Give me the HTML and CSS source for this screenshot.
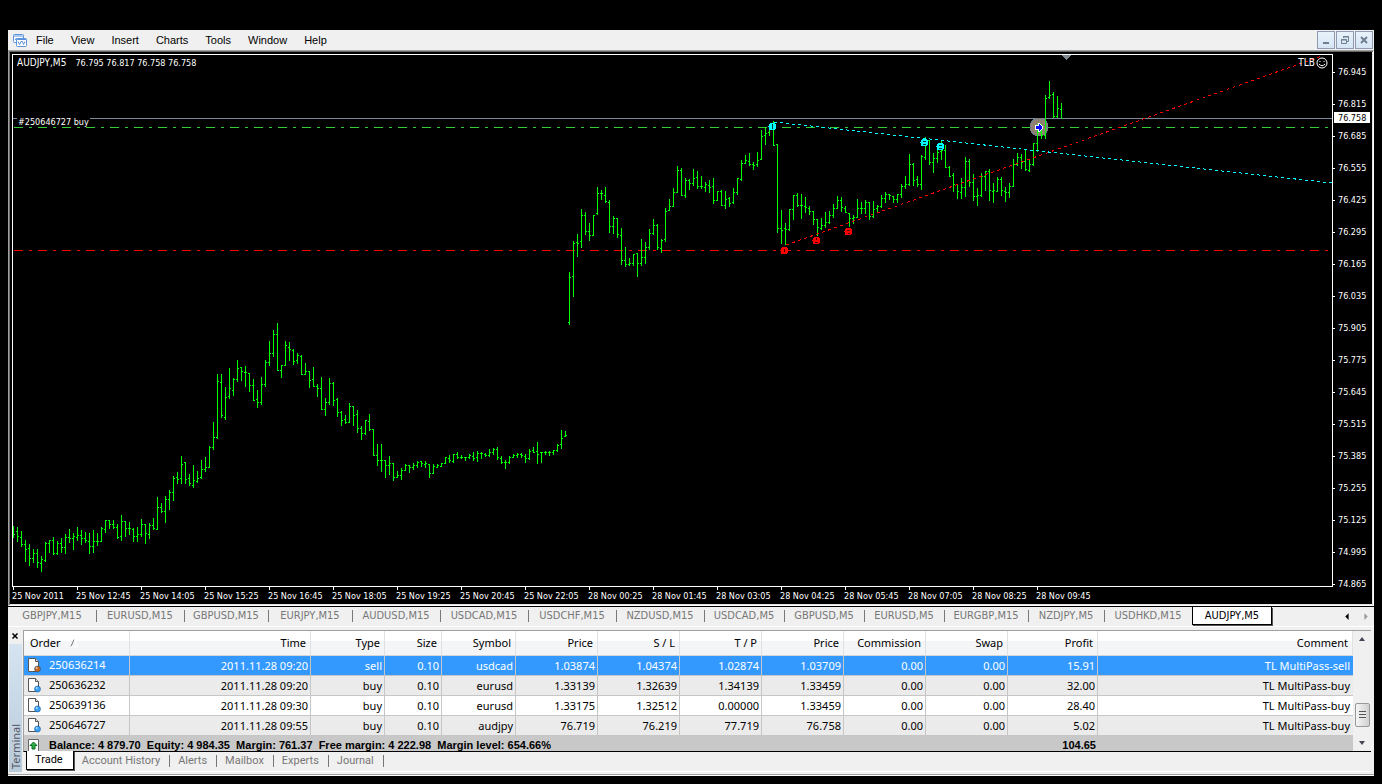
FILE: index.html
```html
<!DOCTYPE html>
<html lang="en">
<head>
<meta charset="utf-8">
<title>AUDJPY,M5</title>
<link rel="stylesheet" href="styles.css">
</head>
<body>
<svg class="defs" width="0" height="0" aria-hidden="true">
  <symbol id="doc" viewBox="0 0 15 15">
    <path d="M1.500 .5h7l3 3v10h-10z" fill="#fff" stroke="#555"/>
    <path d="M8.500 .5v3h3" fill="#ddd" stroke="#555"/>
    <circle cx="10.500" cy="11" r="3" fill="currentColor" stroke="#0a4a90" stroke-opacity=".5"/>
    <circle cx="9.700" cy="10" r="1" fill="#fff" fill-opacity=".6"/>
  </symbol>
</svg>
<div class="app">
  <header class="menubar">
    <svg class="logo" viewBox="0 0 15 15" aria-hidden="true">
      <rect x="1.500" y="1.500" width="10" height="8" rx="1" fill="#fff" stroke="#5b94dc"/>
      <path d="M2 3h9" stroke="#5b94dc"/>
      <path d="M3 7l1.500-2 1 2 1.500-2" fill="none" stroke="#5b94dc"/>
      <rect x="4.500" y="5.500" width="10" height="8" rx="1" fill="#fff" stroke="#5b94dc"/>
      <path d="M5 6.500h9" stroke="#5b94dc"/>
      <path d="M6 8.500l1.500 3 1.500-3 1.500 0 1 3 1.500-3" fill="none" stroke="#5b94dc"/>
    </svg>
    <nav class="menu">
      <button>File</button><button>View</button><button>Insert</button><button>Charts</button><button>Tools</button><button>Window</button><button>Help</button>
    </nav>
    <div class="winbtns">
      <button aria-label="Minimize"><svg viewBox="0 0 16 16"><path d="M5 10h6v2H5z" fill="#6d7f92"/></svg></button>
      <button aria-label="Restore"><svg viewBox="0 0 16 16"><path d="M6.500 6V4.500h5v5H10M6 5h6" fill="none" stroke="#6d7f92"/><path d="M4.500 7.500h5v4h-5zM4 8h6" fill="none" stroke="#6d7f92"/></svg></button>
      <button aria-label="Close"><svg viewBox="0 0 16 16"><path d="M5 5l6 6M11 5l-6 6" stroke="#6d7f92" stroke-width="2"/></svg></button>
    </div>
  </header>

  <main class="chart">
    <div class="plot">
      <svg class="canvas" viewBox="13 55 1319 531" preserveAspectRatio="none" shape-rendering="crispEdges">
        <path d="M13 118.500H1332" stroke="#778899"/>
        <path d="M14 127.500H1329" stroke="#32cd32" stroke-dasharray="9 6 3 6"/>
        <path d="M14 250.500H1329" stroke="#f00" stroke-dasharray="9 6 3 6"/>
        <circle cx="1039" cy="127" r="9" fill="#8f8070" stroke="#708090"/>
        <path id="bars" fill="#0f0"/>
        <path d="M774 122L1332 183" stroke="#0ff" stroke-dasharray="3 3"/>
        <path d="M786 245L1322 56" stroke="#f00" stroke-dasharray="3 3.400"/>
        <path d="M1061 55h11l-5.500 5z" fill="#808890"/>
        <g fill="#0ff">
          <circle cx="772.500" cy="126.500" r="4"/><circle cx="924.500" cy="142.500" r="4"/><circle cx="940.500" cy="146.500" r="4"/>
        </g>
        <g fill="#f00">
          <circle cx="784.500" cy="250.500" r="4"/><circle cx="816.500" cy="240.500" r="4"/><circle cx="848.500" cy="231.500" r="4"/>
        </g>
        <g fill="#003c3c">
          <path d="M772 124h1v5h-1z"/><path d="M923 141h3v1h-3zM923 144h3v1h-3z"/><path d="M939 145h3v1h-3zM939 148h3v1h-3z"/>
        </g>
        <g fill="#400">
          <path d="M784 249h1v3h-1z"/><path d="M816 238h1v2h-1zM815 242h3v1h-3z"/><path d="M847 230h3v1h-3zM848 233h2v1h-2z"/>
        </g>
        <path d="M1035 125h3v-2h2v1h1v1h1v1h1v3h-1v1h-1v1h-1v1h-2v-2h-3z" fill="#fff"/>
        <path d="M1036 126h3v-2h1v1h1v1h1v3h-1v1h-1v1h-1v-2h-3z" fill="#00f"/>
      </svg>
      <p class="quote"><span class="symbol">AUDJPY,M5</span><span>76.795 76.817 76.758 76.758</span></p>
      <p class="order-tag">#250646727 buy</p>
      <p class="expert">TLB
        <svg viewBox="0 0 12 12" aria-hidden="true"><circle cx="6" cy="6" r="5" fill="none" stroke="#fff"/><path d="M4 4v1M8 4v1M3 7q3 3.500 6 0" fill="none" stroke="#fff"/></svg>
      </p>
    </div>
    <div class="prices">
      <span>76.945</span><span>76.815</span><span>76.685</span><span>76.555</span><span>76.425</span><span>76.295</span><span>76.165</span><span>76.035</span><span>75.905</span><span>75.775</span><span>75.645</span><span>75.515</span><span>75.385</span><span>75.255</span><span>75.125</span><span>74.995</span><span>74.865</span>
      <b class="bid">76.758</b>
    </div>
    <div class="times">
      <span>25 Nov 2011</span><span>25 Nov 12:45</span><span>25 Nov 14:05</span><span>25 Nov 15:25</span><span>25 Nov 16:45</span><span>25 Nov 18:05</span><span>25 Nov 19:25</span><span>25 Nov 20:45</span><span>25 Nov 22:05</span><span>28 Nov 00:25</span><span>28 Nov 01:45</span><span>28 Nov 03:05</span><span>28 Nov 04:25</span><span>28 Nov 05:45</span><span>28 Nov 07:05</span><span>28 Nov 08:25</span><span>28 Nov 09:45</span>
    </div>
  </main>

  <nav class="chart-tabs">
    <button class="w88">GBPJPY,M15</button><button class="w88">EURUSD,M15</button><button class="w84">GBPUSD,M15</button><button class="w84">EURJPY,M15</button><button class="w88">AUDUSD,M15</button><button class="w88">USDCAD,M15</button><button class="w88">USDCHF,M15</button><button class="w88">NZDUSD,M15</button><button class="w80">USDCAD,M5</button><button class="w80">GBPUSD,M5</button><button class="w80">EURUSD,M5</button><button class="w84">EURGBP,M15</button><button class="w76">NZDJPY,M5</button><button class="w88 last">USDHKD,M15</button><button class="w80 active">AUDJPY,M5</button>
    <span class="tab-scroll">
      <button aria-label="Previous charts"><svg viewBox="0 0 8 8"><path d="M5 1v6L2 4z" fill="#000"/></svg></button>
      <button aria-label="Next charts"><svg viewBox="0 0 8 8"><path d="M3 1v6l3-3z" fill="#999"/></svg></button>
    </span>
  </nav>

  <section class="terminal">
    <aside class="grip">
      <button aria-label="Close terminal"><svg viewBox="0 0 8 8"><path d="M1.500 1.500l5 5M6.500 1.500l-5 5" stroke="#000" stroke-width="1.500"/></svg></button>
      <span class="caption">Terminal</span>
    </aside>
    <div class="body">
      <div class="frame">
        <table class="orders">
          <colgroup><col class="c106"><col class="c181"><col class="c74"><col class="c57"><col class="c74"><col class="c82"><col class="c82"><col class="c82"><col class="c82"><col class="c82"><col class="c82"><col class="c90"><col></colgroup>
          <thead>
            <tr><th class="left">Order<svg class="sort" viewBox="0 0 8 8"><path d="M1 7.500L4 .5" stroke="#777"/><path d="M4 .5l3.500 7H1" fill="none" stroke="#fff"/></svg></th><th>Time</th><th>Type</th><th>Size</th><th>Symbol</th><th>Price</th><th>S / L</th><th>T / P</th><th>Price</th><th>Commission</th><th>Swap</th><th>Profit</th><th>Comment</th></tr>
          </thead>
          <tbody>
            <tr class="selected"><td class="left"><svg class="doc sell"><use href="#doc"/></svg>250636214</td><td>2011.11.28 09:20</td><td>sell</td><td>0.10</td><td>usdcad</td><td>1.03874</td><td>1.04374</td><td>1.02874</td><td>1.03709</td><td>0.00</td><td>0.00</td><td>15.91</td><td>TL MultiPass-sell</td></tr>
            <tr class="alt"><td class="left"><svg class="doc"><use href="#doc"/></svg>250636232</td><td>2011.11.28 09:20</td><td>buy</td><td>0.10</td><td>eurusd</td><td>1.33139</td><td>1.32639</td><td>1.34139</td><td>1.33459</td><td>0.00</td><td>0.00</td><td>32.00</td><td>TL MultiPass-buy</td></tr>
            <tr><td class="left"><svg class="doc"><use href="#doc"/></svg>250639136</td><td>2011.11.28 09:30</td><td>buy</td><td>0.10</td><td>eurusd</td><td>1.33175</td><td>1.32512</td><td>0.00000</td><td>1.33459</td><td>0.00</td><td>0.00</td><td>28.40</td><td>TL MultiPass-buy</td></tr>
            <tr class="alt"><td class="left"><svg class="doc"><use href="#doc"/></svg>250646727</td><td>2011.11.28 09:55</td><td>buy</td><td>0.10</td><td>audjpy</td><td>76.719</td><td>76.219</td><td>77.719</td><td>76.758</td><td>0.00</td><td>0.00</td><td>5.02</td><td>TL MultiPass-buy</td></tr>
          </tbody>
          <tfoot>
            <tr><td class="left" colspan="11"><svg class="sum" viewBox="0 0 15 12"><path d="M1.500 12V.5h10V12" fill="#fff" stroke="#666"/><path d="M6.500 3l3.500 3.500H8V10H5V6.500H3z" fill="#2fae4a" stroke="#0b6b20"/></svg><span class="totals">Balance: 4 879.70&nbsp; Equity: 4 984.35&nbsp; Margin: 761.37&nbsp; Free margin: 4 222.98&nbsp; Margin level: 654.66%</span></td><td>104.65</td><td></td></tr>
          </tfoot>
        </table>
        <div class="scrollbar">
          <button aria-label="Scroll up"><svg viewBox="0 0 8 8"><path d="M1 6h6L4 2z" fill="#445"/></svg></button>
          <span class="thumb"><i></i></span>
          <button aria-label="Scroll down"><svg viewBox="0 0 8 8"><path d="M1 2h6L4 6z" fill="#445"/></svg></button>
        </div>
      </div>
      <nav class="pages">
        <button class="active">Trade</button><button>Account History</button><button>Alerts</button><button>Mailbox</button><button>Experts</button><button>Journal</button>
      </nav>
    </div>
  </section>
</div>
<script src="chart.js"></script>
</body>
</html>
```
FILE: styles.css
```css
* { box-sizing: border-box; }
body {
  margin: 0;
  min-height: 100vh;
  padding: 30px 8px 8px;
  display: flex;
  flex-direction: column;
  background: #000;
  color: #000;
  font: 11px/14px "Noto Sans", sans-serif;
}
button {
  margin: 0;
  padding: 0;
  border: 0;
  background: none;
  color: inherit;
  font: inherit;
}
p { margin: 0; }
svg { display: block; }
.defs { position: absolute; }

.app {
  flex: 1;
  display: flex;
  flex-direction: column;
  background: #f0f0f0;
  border-bottom: 1px solid #fff;
  box-shadow: inset 0 -1px #a0a0a0;
  padding-bottom: 1px;
}

/* Menu */
.menubar {
  display: flex;
  align-items: center;
  height: 20px;
  padding: 0 1px 0 4px;
}
.logo { width: 15px; height: 15px; }
.menu {
  display: flex;
  gap: 17px;
  margin-left: 9px;
  font: 11px/16px "Liberation Sans", sans-serif;
}
.winbtns { display: flex; gap: 1px; margin-left: auto; }
.winbtns button {
  width: 18px;
  height: 18px;
  border: 1px solid #8e9bb0;
  background: linear-gradient(#e9f2fb, #d6e5f5);
}
.winbtns svg { width: 16px; height: 16px; }

/* Chart */
.chart {
  flex: 1;
  display: grid;
  grid-template: minmax(0, 1fr) 17px / minmax(0, 1fr) 39px;
  padding: 1px 1px 1px 3px;
  background: #000;
  color: #fff;
  border: 1px solid;
  border-color: #a0a0a0 #fff #fff #a0a0a0;
  box-shadow: inset 1px 1px #696969, inset -1px -1px #e3e3e3;
  font: 9px/12px "DejaVu Sans Condensed", "DejaVu Sans", sans-serif;
}
.plot {
  position: relative;
  margin-top: 2px;
  border: 1px solid #fff;
}
.canvas { position: absolute; width: 100%; height: 100%; }
.quote {
  position: absolute;
  top: 2px;
  left: 4px;
  display: flex;
  gap: 9px;
}
.symbol { font-size: 10px; }
.order-tag {
  position: absolute;
  top: 61px;
  left: 4px;
  padding: 0 1px;
  height: 11px;
  background: #000;
}
.expert {
  position: absolute;
  top: 2px;
  right: 4px;
  display: flex;
  gap: 1px;
  font-size: 10px;
}
.expert svg { width: 12px; height: 12px; }
.prices {
  grid-row: span 2;
  position: relative;
  display: flex;
  flex-direction: column;
  padding: 4px 0;
}
.prices span { flex: 1; display: flex; align-items: center; }
.prices span::before {
  content: "";
  width: 2px;
  height: 1px;
  margin-right: 3px;
  background: #fff;
}
.bid {
  position: absolute;
  top: 60px;
  left: 1px;
  width: 36px;
  height: 11px;
  padding-left: 4px;
  background: #fff;
  color: #000;
  font-weight: normal;
}
.times { display: flex; white-space: nowrap; overflow: hidden; }
.times span { width: 64px; line-height: 18px; flex: none; position: relative; }
.times span::before {
  content: "";
  position: absolute;
  top: 0;
  left: 1px;
  width: 1px;
  height: 3px;
  background: #fff;
}

/* Chart tabs */
.chart-tabs {
  display: flex;
  height: 21px;
  border-top: 1px solid #000;
  border-bottom: 1px solid #fff;
  font: 11px/12px "DejaVu Sans Condensed", "DejaVu Sans", sans-serif;
  color: #777;
  white-space: nowrap;
}
.chart-tabs > button {
  position: relative;
  height: 17px;
}
.chart-tabs > button:not(.last):not(.active)::after {
  content: "";
  position: absolute;
  top: 3px;
  right: -1px;
  width: 1px;
  height: 12px;
  background: #777;
}
.chart-tabs > .active {
  height: 18px;
  background: #fff;
  border: 1px solid #000;
  border-top: 0;
  box-shadow: 1px 1px #555;
  color: #000;
}
.w76 { width: 76px; }
.w80 { width: 80px; }
.w84 { width: 84px; }
.w88 { width: 88px; }
.tab-scroll { display: flex; gap: 9px; align-items: center; margin: 0 4px 0 auto; }
.tab-scroll svg { width: 9px; height: 9px; }

/* Terminal */
.terminal {
  display: grid;
  grid-template-columns: 15px minmax(0, 1fr);
  padding: 3px 3px 2px 0;
}
.grip { display: flex; flex-direction: column; }
.grip button { height: 14px; padding: 0 0 3px 3px; }
.grip button svg { width: 8px; height: 8px; }
.caption {
  flex: 1;
  margin: 0 1px;
  padding-top: 3px;
  writing-mode: vertical-rl;
  transform: rotate(180deg);
  line-height: 13px;
  color: #556;
  background: linear-gradient(#b9cad9, #d6e4f1);
}
.frame {
  display: flex;
  border-top: 1px solid #a0a0a0;
  border-left: 1px solid #a0a0a0;
  border-bottom: 1px solid #000;
}
.orders {
  flex: 1;
  width: 100%;
  table-layout: fixed;
  border-collapse: separate;
  border-spacing: 0;
  background: #fff;
  white-space: nowrap;
}
.c106 { width: 106px; }
.c181 { width: 181px; }
.c74 { width: 74px; }
.c57 { width: 57px; }
.c82 { width: 82px; }
.c90 { width: 90px; }
.orders th, .orders td {
  padding: 0 2px 0 0;
  text-align: right;
  font-weight: normal;
}
.orders th {
  height: 25px;
  padding-right: 4px;
  border-right: 1px solid #dfe1e4;
  border-bottom: 1px solid #d5d5d5;
  background: linear-gradient(#fff 40%, #f4f5f7 40%);
}
.orders .left { text-align: left; }
.orders th.left { padding-left: 6px; }
.sort { display: inline-block; width: 8px; height: 8px; margin-left: 10px; }
.orders tbody td {
  height: 20px;
  border-right: 1px solid #c6c6c6;
  border-bottom: 1px solid #c6c6c6;
}
.alt { background: #ebebeb; }
.selected { background: #3399ff; color: #fff; }
.orders tbody td:last-child { border-right: 0; padding-right: 3px; }
.doc {
  display: inline-block;
  width: 15px;
  height: 15px;
  margin: 0 7px 0 3px;
  vertical-align: middle;
  color: #3aa0f4;
}
.doc.sell { color: #c4671a; }
.orders tfoot td {
  height: 15px;
  padding-top: 3px;
  background: #c8c8c8;
  font: bold 11px/12px "Liberation Sans", sans-serif;
}
.sum { float: left; width: 15px; height: 12px; margin: 0 7px 0 3px; }
.scrollbar {
  width: 18px;
  display: flex;
  flex-direction: column;
  align-items: center;
  padding: 4px 0;
}
.scrollbar svg { width: 8px; height: 8px; }
.thumb {
  width: 15px;
  height: 24px;
  margin: auto 0 12px;
  padding: 7px 3px;
  border: 1px solid #989898;
  border-radius: 2px;
  background: linear-gradient(90deg, #f5f5f5, #d0d0d0);
}
.thumb i { display: block; height: 8px; background: repeating-linear-gradient(#555 0 1px, #e8e8e8 1px 3px); }
.pages {
  display: flex;
  height: 20px;
  padding-left: 3px;
  border-bottom: 1px solid #fff;
  color: #777;
  font-family: Roboto, sans-serif;
}
.pages button {
  position: relative;
  height: 18px;
  padding: 0 10px 0 8px;
}
.pages button:not(.active)::after {
  content: "";
  position: absolute;
  top: 3px;
  right: 0;
  width: 1px;
  height: 12px;
  background: #777;
}
.pages .active {
  height: 19px;
  margin-top: -1px;
  background: #fff;
  border: 1px solid #000;
  border-top: 0;
  box-shadow: 1px 1px #555;
  color: #000;
}
```
FILE: chart.js
```js
// Each segment lists its bars as [high, low, open, close],
// in thirds of a pixel measured down from the segment's top.
const segments = [
  { top: 400, bars: [
    [378,413,403,403],[381,425,394,409],[393,440,411,432],[420,485,433,448],[432,497,446,475],[447,488,475,460],[447,503,460,487],[468,515,490,478],
    [426,485,481,430],[420,458,430,421],[411,464,421,460],[423,464,460,430],[414,458,430,442],[402,461,442,412],[387,428,412,415],[399,450,415,409],
    [381,422,411,406],[390,434,406,415],[396,430,415,421],[399,461,424,439],[390,458,439,423],[399,437,423,424],[381,425,424,385],[360,398,387,362],
    [360,386,362,374],[360,386,374,382],[372,416,382,412],[345,422,409,363],[363,410,363,385],[366,404,385,385],[384,425,388,408],[381,425,408,403],
    [357,410,403,373],[372,431,373,400],[369,416,403,376],[354,389,376,385],[291,389,387,322],[309,338,322,334],[288,368,334,298],[270,329,298,277],
    [228,302,277,234],[216,251,232,238],[168,251,234,192],[186,251,187,238],[222,257,235,250],[195,263,256,241],[213,248,244,235]
  ]},
  { top: 310, bars: [
    [450,506,502,478],[441,485,478,472],[408,473,472,412],[336,419,412,382],[192,386,382,214],[192,323,217,316],[231,329,322,262],[174,266,259,235],
    [204,257,241,208],[150,215,208,175],[171,212,172,184],[168,230,187,187],[189,245,190,226],[207,272,226,271],[240,293,268,277],[201,284,277,223],
    [150,230,223,157],[93,167,157,130],[60,140,130,73],[39,182,73,181],[165,203,181,166],[93,167,166,106],[96,152,112,118],[117,164,121,154],
    [129,161,151,136],[135,194,139,193],[159,194,193,184],[183,233,184,211],[171,230,208,229],[222,260,229,235],[201,299,235,298],[264,317,298,277],
    [204,284,277,220],[216,287,220,271],[264,320,268,307],[303,347,307,331],[315,341,328,337],[279,338,337,289],[288,347,289,316],[300,368,313,355],
    [348,389,355,370],[330,374,370,331],[312,362,334,358],[357,437,358,436],[402,467,436,451],[402,485,451,451],[450,503,451,466],[438,494,466,460],
    [459,512,460,502],[483,503,502,496],[474,509,496,481],[462,482,481,466],[465,488,466,472],[459,479,472,466],[453,473,466,457],[453,470,454,460],
    [453,473,463,460],[462,503,463,490],[462,491,490,469],[462,473,472,466],[459,470,469,460],[441,461,460,442],[435,458,445,451],[432,458,454,433],
    [426,446,433,442],[435,446,442,442],[441,452,442,442],[432,446,442,436],[426,452,439,445],[423,455,442,430],[426,446,430,430],[429,440,433,436],
    [417,440,436,427],[414,434,427,418],[411,449,418,442]
  ]},
  { top: 110, bars: [
    [1038,1061,1045,1057],[1050,1076,1057,1057],[1038,1061,1057,1042],[1032,1043,1042,1036],[1029,1043,1036,1033],[1029,1043,1033,1036],[1032,1058,1039,1045],
    [1017,1049,1045,1024],[1011,1028,1021,1027],[996,1061,1024,1033],[1026,1058,1027,1027],[1023,1034,1027,1027],[1023,1037,1027,1027],[1020,1034,1027,1021],
    [1002,1025,1021,1006],[960,1016,1003,985],[963,980,979,976],[486,644,637,502],[393,560,499,400],[372,440,397,400],[297,413,394,316],[306,374,316,364],
    [339,392,364,376],[315,377,376,316],[231,314,311,250],[240,269,250,250],[231,278,256,274],[270,368,277,349],[318,371,349,325],[324,383,325,374],
    [354,464,376,451],[411,470,451,463],[444,467,463,460],[432,467,460,433],[429,500,430,460],[387,467,460,442],[396,461,442,412],[357,419,412,370],
    [327,374,370,346],[342,419,346,412],[387,428,415,391],[294,395,388,304],[267,302,301,289],[234,290,289,247],[168,248,247,181],[174,257,181,256],
    [204,263,256,211],[207,239,211,220],[177,227,220,205],[183,236,202,229],[198,236,229,229],[216,245,232,223],[210,248,226,232],[204,281,229,271],
    [243,272,271,244],[240,287,244,286],[243,296,286,268],[261,290,265,280],[234,281,277,247],[204,254,247,205],[150,212,208,160],[135,161,160,151],
    [129,167,154,163],[156,179,163,166],[126,170,163,151],[60,149,148,79],[52,104,76,70],[45,77,67,50],[33,107,50,106]
  ]},
  { top: 70, bars: [
    [222,488,223,475],[420,521,475,481],[459,525,475,478],[417,482,478,418],[375,449,418,377],[369,410,377,406],[372,446,406,406],[381,428,409,412],
    [408,434,415,424],[423,464,424,448],[447,497,448,472],[444,479,475,466],[426,473,466,457],[423,461,457,436],[402,443,436,415],[378,416,415,391],
    [381,425,391,412],[408,428,415,427],[429,470,430,445],[435,461,445,442],[387,443,442,415],[396,431,415,415],[390,431,415,397],[396,449,397,439],
    [393,443,439,418],[405,425,415,409],[375,413,409,385],[366,398,385,373],[372,389,373,376],[378,398,379,388],[372,398,388,373],[342,383,373,349],
    [318,356,349,343],[252,347,343,283],[279,347,283,331],[318,350,328,343],[255,359,343,259],[200,269,262,212],[210,284,212,277],[249,308,277,265],
    [222,278,265,247],[210,269,245,240],[225,293,240,292],[288,320,292,319],[309,365,317,343],[342,386,343,364],[324,386,367,352],[261,380,352,275],
    [267,350,275,337],[312,392,337,379],[354,407,379,376],[309,380,376,319],[303,362,319,304],[297,392,304,361],[339,398,364,361],[321,365,364,328],
    [321,377,328,361],[351,395,364,367],[339,383,367,349],[267,350,349,283],[249,287,283,262],[252,296,262,277],[237,302,275,298],[270,305,301,283],
    [219,287,283,220],[162,245,220,187],[162,206,187,196],[75,206,196,86],[33,86,83,77],[66,145,73,139],[78,145,139,116],[99,145,118,145]
  ]}
];

let x = 13;
let d = "";
for (const { top, bars } of segments) {
  for (const [high, low, open, close] of bars) {
    const y1 = top + Math.round(high / 3);
    const y2 = top + Math.round(low / 3);
    const yo = top + Math.floor(open / 3);
    const yc = top + Math.floor(close / 3);
    d += `M${x} ${y1}h1V${y2}h-1z`;
    d += `M${x - 1} ${yo}h1v1h-1z`;
    d += `M${x + 1} ${yc}h1v1h-1z`;
    x += 4;
  }
}
document.getElementById("bars").setAttribute("d", d);
```
